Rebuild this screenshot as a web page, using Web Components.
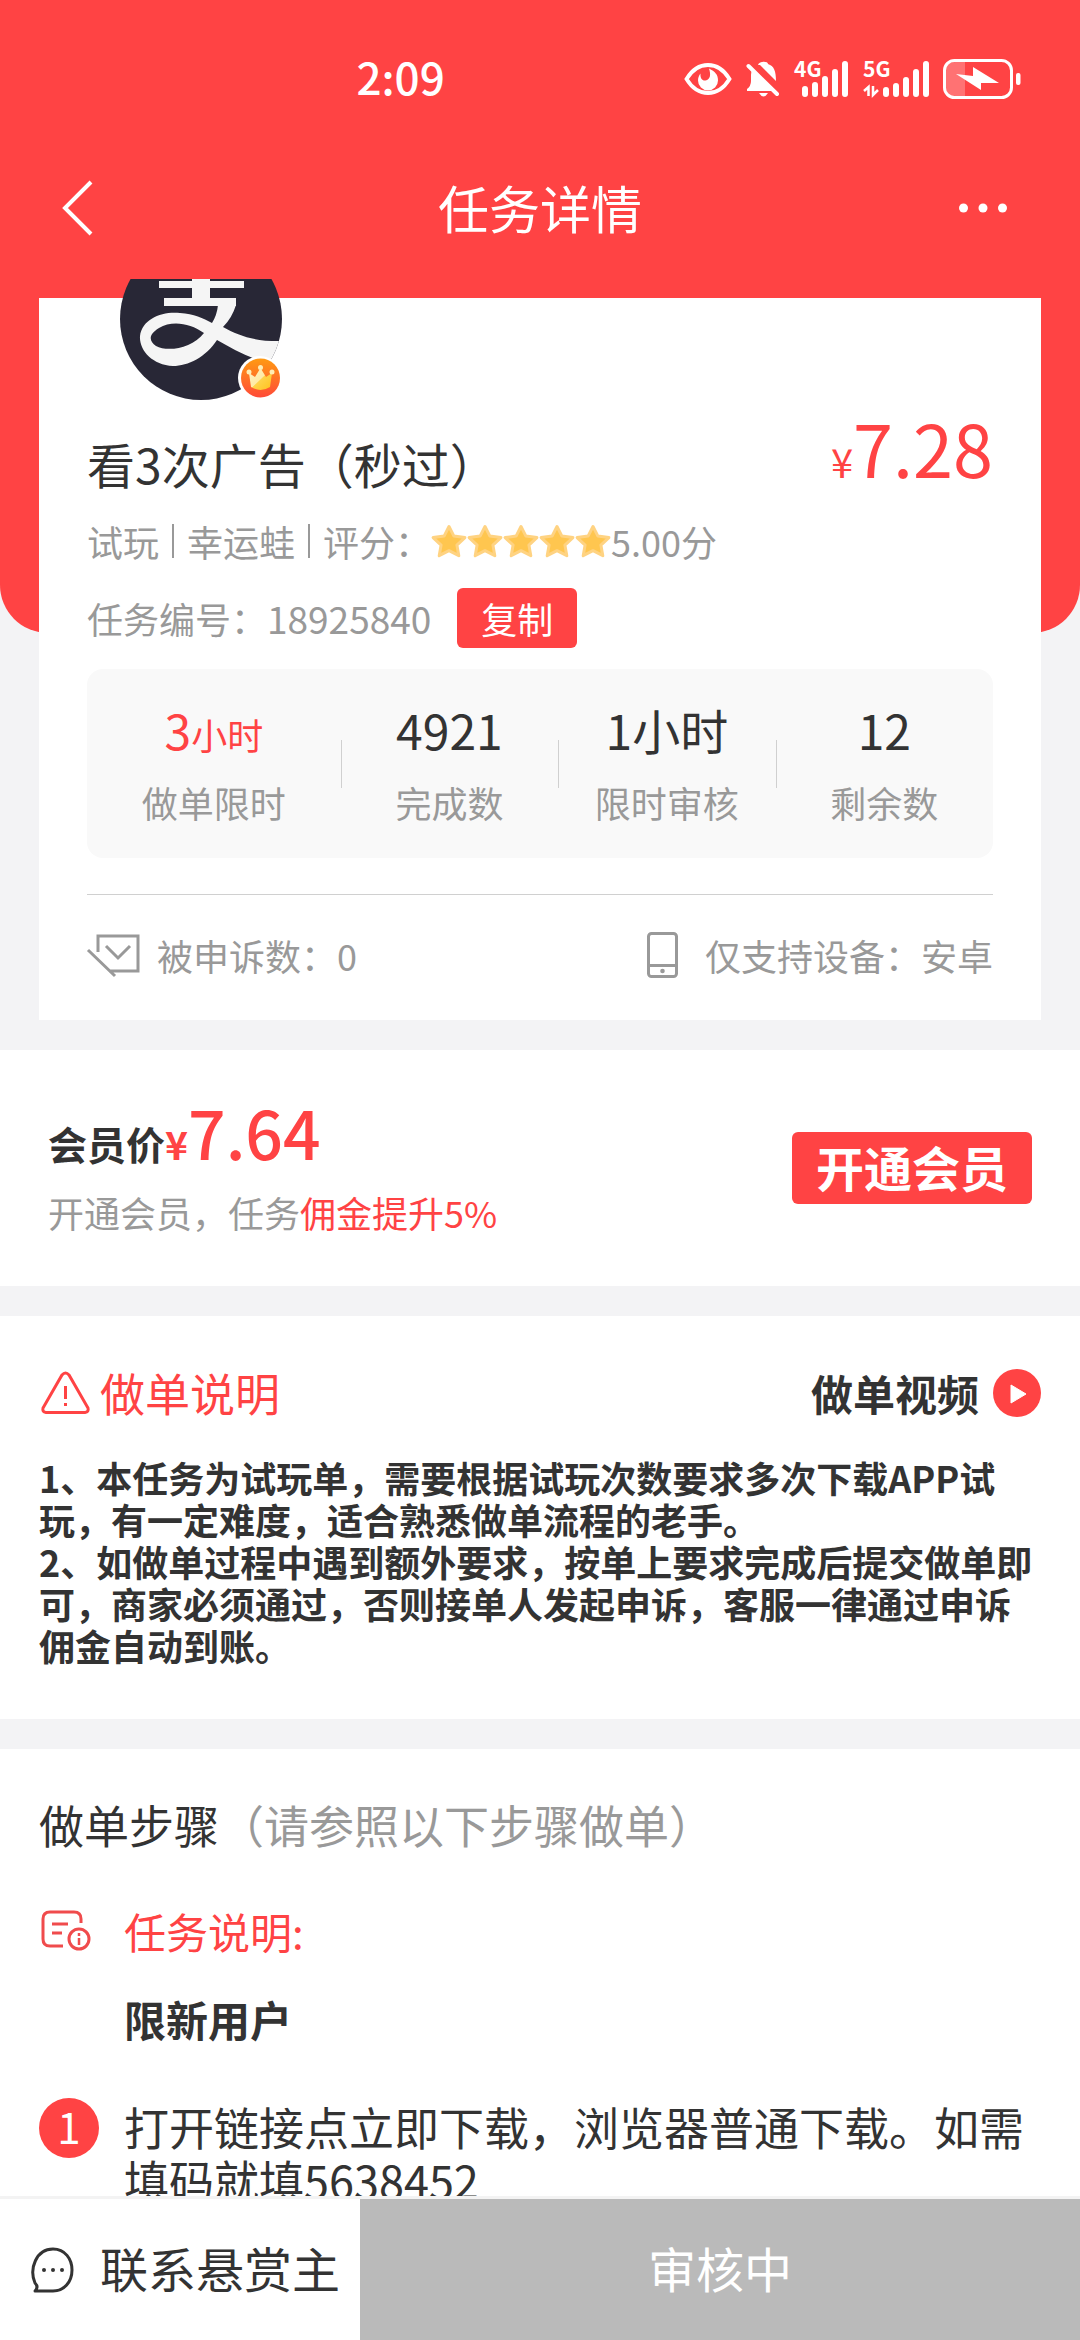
<!DOCTYPE html>
<html lang="zh-CN">
<head>
<meta charset="utf-8">
<meta name="viewport" content="width=device-width, initial-scale=1">
<title>任务详情</title>
<style>
:root{--red:#ff4344;--ink:#333;--gray:#999;--bg:#f3f3f5}
html,body{margin:0;height:100%}
body{font-family:"Noto Sans CJK SC","Noto Sans",sans-serif;font-size:36px;line-height:52px;color:var(--ink);background:var(--bg)}
</style>
</head>
<body>
<task-page></task-page>
<script>
const define=(name,html)=>customElements.define(name,class extends HTMLElement{
  constructor(){
    super();
    const t=document.createElement('template');
    t.innerHTML='<style>*{box-sizing:border-box}h1,h2,p{margin:0;font:inherit}button,a{font:inherit;color:inherit;border:0;padding:0;background:none;text-decoration:none}svg{display:block;flex:none;overflow:visible}</style>'+html;
    this.attachShadow({mode:'open'}).append(t.content.cloneNode(true));
  }
});

define('status-bar',`
<style>
:host{display:flex;align-items:center;justify-content:space-between;height:158px;padding:0 59px 0 33%;color:#fff}
time{font-size:44px;font-weight:500;line-height:60px;margin-bottom:6px}
div{display:flex;align-items:center;gap:14px}
text{font-size:21px;font-weight:700;fill:#fff}
</style>
<time>2:09</time>
<div>
<svg width="48" height="36" viewBox="0 0 48 36"><path d="M2.500 18Q11 4 24 4T45.500 18Q37 32 24 32T2.500 18Z" fill="none" stroke="#fff" stroke-width="3.800"/><path d="M25 7.500c6 3 9 6 9 12a10 10 0 0 1-20 0c0-3 1-5 2.500-7-.5 5 2 7.500 5 7 5-1 5.500-6 3.500-12Z" fill="#fff"/></svg>
<svg width="34" height="36" viewBox="0 0 34 36"><path d="M12 4C13 0 22 0 22 3C28 5 30 10 30 20L14 4Z" fill="#fff"/><path d="M6 9L27 30H1V28Q5 25 5 20V14Q5 11 6 9Z" fill="#fff"/><path d="M13 32h9q-4.500 7-9 0Z" fill="#fff"/><path d="M2.500 5L31 33" stroke="#fff" stroke-width="4" stroke-linecap="round"/></svg>
<svg width="55" height="36" viewBox="0 0 55 36"><text x="0" y="16">4G</text><path d="M11 28v5M21 24v9M31 18v15M41 11v22M51 3v30" stroke="#fff" stroke-width="6" stroke-linecap="round"/></svg>
<svg width="66" height="36" viewBox="0 0 66 36"><text x="0" y="16">5G</text><path d="M23 29v4M33 25v8M43 19v14M53 11v22M63 3v30" stroke="#fff" stroke-width="6" stroke-linecap="round"/><path d="M1 30L5.500 26V35M10 25V34L15 29" fill="none" stroke="#fff" stroke-width="2.500"/></svg>
<svg width="78" height="40" viewBox="0 0 78 40"><path d="M12 3H22V37H12Q3 37 3 28V12Q3 3 12 3Z" fill="#fff" opacity=".25"/><rect x="1.500" y="1.500" width="67" height="37" rx="10" fill="none" stroke="#fff" stroke-width="3"/><rect x="73" y="14" width="4.500" height="12" rx="2" fill="#fff"/><path d="M13 15L30 17L30 8L56 24L38 24L38 31Z" fill="#fff"/></svg>
</div>`);

define('nav-bar',`
<style>
:host{display:grid;grid-template-columns:1fr auto 1fr;align-items:center;height:121px;padding:0 62px 24px;color:#fff}
h1{font-size:51px;line-height:64px}
button{justify-self:start;padding-top:3px}
button:last-child{justify-self:end}
</style>
<button aria-label="返回"><svg width="46" height="56" viewBox="0 0 46 56"><path d="M29 2L3 28L29 54" fill="none" stroke="#fff" stroke-width="4"/></svg></button>
<h1>任务详情</h1>
<button aria-label="更多"><svg width="59" height="56" viewBox="0 0 59 56"><g fill="#fff"><circle cx="4.500" cy="28" r="4.500"/><circle cx="24" cy="28" r="4.500"/><circle cx="43.500" cy="28" r="4.500"/></g></svg></button>`);

define('shop-avatar',`
<style>
:host{display:block;position:relative;width:162px;height:162px}
.badge{position:absolute;right:0;bottom:0}
</style>
<svg width="162" height="162" viewBox="0 0 162 162"><defs><clipPath id="c"><circle cx="81" cy="81" r="81"/></clipPath></defs>
<g clip-path="url(#c)"><rect width="162" height="162" fill="#282736"/>
<path d="M72 25H90V43H124V50H90V60H116V68H72V60H72V50H39V43H72ZM44 60H80V68H44Z" fill="#f5f5f5"/>
<path fill-rule="evenodd" d="M98 67H116Q112 80 103 89C119 98 136 104 164 103V128C140 126 116 113 97 102C86 119 68 128 53 128C32 127 19 112 20 98C22 81 42 73 60 75C74 76 83 80 92 85Q97 77 98 67ZM84 95C70 85 52 82 39 90C28 97 29 103 36 108C47 114 72 111 84 95Z" fill="#f5f5f5"/></g></svg>
<svg class="badge" width="44" height="44" viewBox="0 0 44 44"><defs><linearGradient id="o" x2="0" y2="1"><stop stop-color="#ff9a12"/><stop offset="1" stop-color="#ff4a38"/></linearGradient><linearGradient id="y" x2="1" y2="1"><stop stop-color="#fff3c8"/><stop offset=".5" stop-color="#ffeaa5"/><stop offset=".52" stop-color="#ffd34a"/><stop offset="1" stop-color="#ffc21c"/></linearGradient></defs><circle cx="22" cy="22" r="22" fill="#fff"/><circle cx="22.500" cy="22" r="19.500" fill="url(#o)"/><path d="M11 17L17 21 22.500 12 28 21 34 17 32 31Q22.500 37 13 31Z" fill="url(#y)"/><g fill="#ffedb4"><circle cx="11" cy="16" r="2.500"/><circle cx="22.500" cy="11.500" r="2.500"/><circle cx="34" cy="16" r="2.500"/></g></svg>`);

define('star-row',`
<style>:host{display:flex}</style>
<svg width="180" height="36" viewBox="0 0 180 36"><defs><path id="s" d="M18 3.500l4.900 9.600 11 1.500-8 7.500 1.900 10.600-9.800-5-9.800 5 1.900-10.600-8-7.500 11-1.500Z" fill="#ffc64f" stroke="#ffd382" stroke-width="3" stroke-linejoin="round"/></defs><use href="#s"/><use href="#s" x="36"/><use href="#s" x="72"/><use href="#s" x="108"/><use href="#s" x="144"/></svg>`);

define('stat-item',`
<style>
:host{display:flex;flex-direction:column;align-items:center;gap:17px;color:var(--ink)}
.v{font-size:48px;line-height:60px}
.l{color:var(--gray)}
</style>
<div class="v"><slot name="value"></slot></div><div class="l"><slot></slot></div>`);

define('task-card',`
<style>
:host{display:grid;--edge:39px}
:host::before{content:"";grid-area:1/1;height:354px;background:var(--red);border-radius:0 0 48px 48px}
.card{grid-area:1/1;margin:19px var(--edge) 0;padding:0 48px;background:#fff;display:flex;flex-direction:column}
shop-avatar{margin:-60px 0 11px 33px}
.title{display:flex;justify-content:space-between;align-items:center;height:104px}
h2{font-size:48px;line-height:64px}
.price{font-size:72px;line-height:72px;margin-bottom:32px;color:var(--red)}
.price small{font-size:40px;line-height:1}
.row{display:flex;align-items:center;color:var(--gray)}
.row i{width:2px;height:34px;background:currentColor;margin:0 13px}
.no{margin:21px 0;height:60px}
.no b{font-size:37px;font-weight:400}
.no button{width:120px;height:60px;margin-left:26px;border-radius:6px;background:var(--red);color:#fff}
.stats{display:grid;grid-template-columns:7fr 6fr 6fr 6fr;padding:30px 0;border-radius:16px;background:#f9f9f9}
.stats small{font-size:36px;line-height:1}
.hot{color:var(--red)}
stat-item+stat-item{background:linear-gradient(#d0d0d0,#d0d0d0) left center/1px 48px no-repeat}
.foot{display:flex;justify-content:space-between;margin-top:36px;padding:34px 0 39px;border-top:1px solid #d0d0d0}
</style>
<section class="card">
<shop-avatar></shop-avatar>
<div class="title"><h2>看3次广告（秒过）</h2><div class="price"><small>¥</small>7.28</div></div>
<div class="row"><span>试玩</span><i></i><span>幸运蛙</span><i></i><span>评分：</span><star-row></star-row><span>5.00分</span></div>
<div class="row no"><span>任务编号：</span><b>18925840</b><button>复制</button></div>
<div class="stats">
<stat-item><span slot="value" class="hot">3<small>小时</small></span>做单限时</stat-item>
<stat-item><span slot="value">4921</span>完成数</stat-item>
<stat-item><span slot="value">1小时</span>限时审核</stat-item>
<stat-item><span slot="value">12</span>剩余数</stat-item>
</div>
<div class="foot">
<div class="row"><svg width="70" height="48" viewBox="0 0 70 48"><g fill="none" stroke="#999" stroke-width="3"><path d="M11 21V5H51V40H22M1 19L28 45M19 15L31 27 43 15"/></g></svg><span>被申诉数：</span><span>0</span></div>
<div class="row"><svg width="58" height="48" viewBox="0 0 58 48"><rect x="1.500" y="2.500" width="28" height="43" rx="3" fill="none" stroke="#999" stroke-width="3"/><path d="M1 34.500H30" stroke="#999" stroke-width="3"/><circle cx="15.500" cy="40" r="2.300" fill="#999"/></svg><span>仅支持设备：</span><span>安卓</span></div>
</div>
</section>`);

define('member-banner',`
<style>
:host{display:flex;justify-content:space-between;align-items:center;height:236px;padding:0 48px;background:#fff}
.p{height:88px;font-size:39px;line-height:82px;font-weight:700}
.p b{color:var(--red);font-weight:700}
.p strong{color:var(--red);font-size:66px;line-height:1;font-weight:500}
.t{color:var(--gray)}
em{font-style:normal;color:var(--red)}
button{width:240px;height:72px;padding-bottom:4px;border-radius:6px;background:var(--red);color:#fff;font-size:48px;font-weight:700;line-height:68px}
</style>
<div><p class="p">会员价<b>¥</b><strong>7.64</strong></p><p class="t">开通会员，任务<em>佣金提升5%</em></p></div>
<button>开通会员</button>`);

define('guide-section',`
<style>
:host{display:block;padding:47px 39px 53px;background:#fff}
header{display:flex;justify-content:space-between;align-items:center;height:60px;margin-bottom:33px}
h2{display:flex;align-items:center;gap:10px;font-size:45px;line-height:60px;color:var(--red)}
a{display:flex;align-items:center;gap:14px;font-size:42px;line-height:60px;font-weight:700}
p{font-weight:700;line-height:42px}
</style>
<header><h2><svg width="51" height="44" viewBox="0 0 51 44"><path d="M23 4Q26.500 0 30 4L49 37Q50 41 46 41.500H7Q3 41 4 37Z" fill="none" stroke="#ff4344" stroke-width="3"/><path d="M26.500 15V28M26.500 32V35" stroke="#ff4344" stroke-width="3"/></svg>做单说明</h2>
<a href="#video">做单视频<svg width="48" height="48" viewBox="0 0 48 48"><circle cx="24" cy="24" r="24" fill="#ff4344"/><path d="M18 16L33 25 18 34Z" fill="#fff" stroke="#fff" stroke-linejoin="round"/></svg></a></header>
<p>1、本任务为试玩单，需要根据试玩次数要求多次下载APP试玩，有一定难度，适合熟悉做单流程的老手。<br>2、如做单过程中遇到额外要求，按单上要求完成后提交做单即可，商家必须通过，否则接单人发起申诉，客服一律通过申诉佣金自动到账。</p>`);

define('step-row',`
<style>
:host{display:grid;grid-template-columns:60px 1fr;column-gap:25px;align-items:start}
.mark{display:flex;align-items:center;height:60px}
</style>
<div class="mark"><slot name="mark"></slot></div><slot></slot>`);

define('step-section',`
<style>
:host{display:block;padding:46px 39px 0;background:#fff}
h2{font-size:45px;line-height:60px}
h2 span{color:var(--gray)}
.head{margin:46px 0 28px;font-size:42px;line-height:60px;color:var(--red)}
.limit{font-size:42px;line-height:60px;font-weight:700;margin-bottom:49px}
.text{font-size:45px;line-height:53px;padding-top:2px}
.n{width:60px;height:60px;border-radius:50%;background:var(--red);color:#fff;font-size:42px;line-height:56px;text-align:center}
</style>
<h2>做单步骤<span>（请参照以下步骤做单）</span></h2>
<step-row class="head"><svg slot="mark" width="54" height="42" viewBox="0 0 54 42"><g fill="none" stroke="#f04b4c" stroke-width="3"><path d="M42 13V9Q42 2 35 2H11Q4 2 4 9V29Q4 36 11 36H24M13 14H29M13 23H23"/><circle cx="40" cy="29" r="10"/><path d="M40 28V35M40 23V26" stroke-width="2.500"/></g></svg><p>任务说明:</p></step-row>
<step-row class="limit"><p>限新用户</p></step-row>
<step-row><span slot="mark" class="n">1</span><p class="text">打开链接点立即下载，浏览器普通下载。如需填码就填5638452</p></step-row>`);

define('action-bar',`
<style>
:host{display:grid;grid-template-columns:1fr 2fr;height:144px;border-top:3px solid #f3f3f3;background:#fff;font-size:48px}
.c{display:flex;align-items:center;gap:26px;padding-left:31px;color:var(--ink);white-space:nowrap}
.s{background:#bababa;color:#fff}
span{display:block;padding-bottom:6px}
</style>
<button class="c"><svg width="43" height="46" viewBox="0 0 43 46"><path d="M4 44Q8 40 4 36C-2 22 5 2 22 2C34 2 41 12 41 23C41 35 33 44 22 44Z" fill="none" stroke="#333" stroke-width="3" stroke-linejoin="round"/><g fill="#333"><circle cx="13" cy="23" r="2"/><circle cx="22" cy="23" r="2"/><circle cx="31" cy="23" r="2"/></g></svg><span>联系悬赏主</span></button>
<button class="s"><span>审核中</span></button>`);

define('task-page',`
<style>
:host{display:flex;flex-direction:column;height:100vh}
header{flex:none;background:var(--red)}
main{flex:1;min-height:0;overflow:hidden;display:flex;flex-direction:column;gap:30px}
main>*{flex:none}
step-section{flex:1 0 auto}
action-bar{flex:none}
</style>
<header><status-bar></status-bar><nav-bar></nav-bar></header>
<main><task-card></task-card><member-banner></member-banner><guide-section></guide-section><step-section></step-section></main>
<action-bar></action-bar>`);
</script>
</body>
</html>
